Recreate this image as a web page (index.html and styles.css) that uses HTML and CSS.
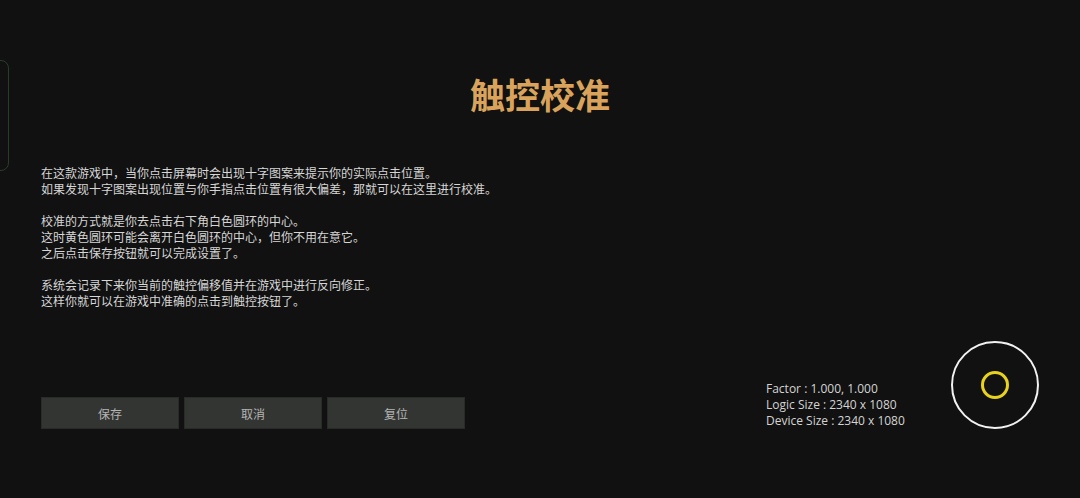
FILE: index.html
```html
<!DOCTYPE html>
<html lang="zh-CN">
<head>
<meta charset="utf-8">
<title>触控校准</title>
<link rel="stylesheet" href="styles.css">
</head>
<body>
<div class="edge-panel"></div>
<main class="page">
  <h1 class="title">触控校准</h1>
  <div class="desc">
    <p>在这款游戏中，当你点击屏幕时会出现十字图案来提示你的实际点击位置。<br>如果发现十字图案出现位置与你手指点击位置有很大偏差，那就可以在这里进行校准。</p>
    <p>校准的方式就是你去点击右下角白色圆环的中心。<br>这时黄色圆环可能会离开白色圆环的中心，但你不用在意它。<br>之后点击保存按钮就可以完成设置了。</p>
    <p>系统会记录下来你当前的触控偏移值并在游戏中进行反向修正。<br>这样你就可以在游戏中准确的点击到触控按钮了。</p>
  </div>
  <div class="bottom">
    <div class="buttons">
      <button class="btn">保存</button>
      <button class="btn">取消</button>
      <button class="btn">复位</button>
    </div>
    <div class="info">
      <div>Factor : 1.000, 1.000</div>
      <div>Logic Size : 2340 x 1080</div>
      <div>Device Size : 2340 x 1080</div>
    </div>
    <div class="target">
      <div class="touch"></div>
    </div>
  </div>
</main>
</body>
</html>
```

FILE: styles.css
```css
html, body {
  margin: 0;
  padding: 0;
  background: #111111;
  width: 1080px;
  height: 498px;
  overflow: hidden;
}

body {
  font-family: "Noto Sans CJK SC", "Noto Sans", sans-serif;
  position: relative;
}

.edge-panel {
  position: absolute;
  left: -20px;
  top: 60px;
  width: 27px;
  height: 109px;
  border: 1px solid #2a3b2c;
  border-radius: 8px;
}

.page {
  display: flex;
  flex-direction: column;
  padding: 76px 41px 0 41px;
}

.title {
  margin: 0;
  text-align: center;
  font-size: 35px;
  line-height: 36px;
  font-weight: 700;
  color: #d9a35c;
}

.desc {
  margin-top: 53px;
  font-size: 12px;
  line-height: 16px;
  color: #d6d6d6;
}

.desc p {
  margin: 0 0 16px 0;
}

.desc p:last-child {
  margin-bottom: 0;
}

.bottom {
  margin-top: 32px;
  display: flex;
  align-items: flex-end;
}

.buttons {
  display: flex;
  gap: 5px;
  flex: 1;
}

.btn {
  width: 138px;
  height: 32px;
  margin: 0;
  padding: 0;
  background: #333533;
  border: 1px solid #292b29;
  color: #b4b4b4;
  font-family: "Noto Sans CJK SC", sans-serif;
  font-size: 12px;
}

.info {
  width: 185px;
  font-family: "Open Sans", "Noto Sans", sans-serif;
  font-size: 12px;
  line-height: 16px;
  color: #d4d4d4;
}

.target {
  width: 84px;
  height: 84px;
  border: 2px solid #f2f2f2;
  border-radius: 50%;
  display: flex;
  align-items: center;
  justify-content: center;
}

.touch {
  width: 22px;
  height: 22px;
  border: 3px solid #e8d21e;
  border-radius: 50%;
}
```
